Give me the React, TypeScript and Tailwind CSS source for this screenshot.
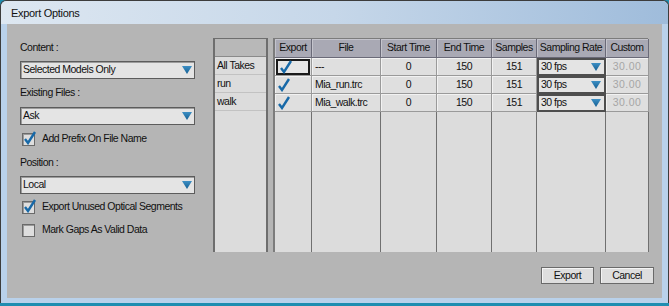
import React from 'react'

const font = "font-['Liberation_Sans',Arial,sans-serif]"

const Arrow = () => (
    <svg width="10" height="8" viewBox="0 0 10 8" className="shrink-0">
        <defs>
            <linearGradient id="ar" x1="0" y1="0" x2="0" y2="1">
                <stop offset="0" stopColor="#3d8fc4" />
                <stop offset="1" stopColor="#145f93" />
            </linearGradient>
        </defs>
        <path d="M0 0 H10 L5 8 Z" fill="url(#ar)" />
    </svg>
)

const Tick = () => (
    <svg width="14" height="14" viewBox="0 0 14 14">
        <path d="M2 8 L5 12 L12 1" stroke="#1769a8" strokeWidth="2.4" fill="none" />
    </svg>
)

const Check = ({ on }: { on: boolean }) => (
    <div className="w-[13px] h-[13px] bg-[#dedede] border border-[#6a6a6a] shadow-[inset_1px_1px_0_#9a9a9a] relative shrink-0">
        {on && (
            <div className="absolute left-[0px] top-[-3px]">
                <Tick />
            </div>
        )}
    </div>
)

const Dropdown = ({ label }: { label: string }) => (
    <div className="h-[18px] w-[175px] bg-[#e4e4e4] border border-[#5c5c5c] shadow-[inset_1px_1px_0_#9c9c9c] flex items-center pl-[2px] pr-[2px] justify-between">
        <span>{label}</span>
        <Arrow />
    </div>
)

const cols = ['Export', 'File', 'Start Time', 'End Time', 'Samples', 'Sampling Rate', 'Custom']
const rows = [
    { file: '---', focus: true },
    { file: 'Mia_run.trc', focus: false },
    { file: 'Mia_walk.trc', focus: false },
]

const cell = 'h-[18px] bg-[#dfdfdf] border-r border-b border-[#9a9a9a] shadow-[inset_1px_1px_0_#f2f2f2] flex items-center'

export default function App() {
    return (
        <div className={`w-[669px] h-[306px] bg-[#1f8db0] ${font} text-[10.5px] tracking-[-0.5px] text-[#111]`}>
            <div className="h-[303px] bg-[#b9d1ea] border-l border-t border-r border-[#3c3c3c] rounded-tl-[6px] rounded-tr-[6px] flex flex-col">
                <div className="h-[23px] shrink-0 bg-gradient-to-r from-[#dde7f1] via-[#c6d7e9] to-[#9fbcdb] rounded-tl-[6px] rounded-tr-[6px] flex items-center pl-[10px] pt-[2px] text-[11px] tracking-[-0.3px] text-[#111]">
                    Export Options
                </div>
                <div className="mx-[6px] h-[274px] bg-[#b5b5b5] flex flex-col">
                    <div className="flex pt-[14px] pl-[13px] h-[228px]">
                        <div className="w-[175px] flex flex-col">
                            <div className="h-[14px] mt-[3px] flex items-center">Content :</div>
                            <div className="mt-[6px]"><Dropdown label="Selected Models Only" /></div>
                            <div className="h-[14px] mt-[7px] flex items-center">Existing Files :</div>
                            <div className="mt-[7px]"><Dropdown label="Ask" /></div>
                            <div className="h-[14px] mt-[7px] flex items-center gap-[7px] pl-[2px]">
                                <Check on />
                                <span>Add Prefix On File Name</span>
                            </div>
                            <div className="h-[14px] mt-[10px] flex items-center">Position :</div>
                            <div className="mt-[6px]"><Dropdown label="Local" /></div>
                            <div className="h-[14px] mt-[6px] flex items-center gap-[7px] pl-[2px]">
                                <Check on />
                                <span className="whitespace-nowrap">Export Unused Optical Segments</span>
                            </div>
                            <div className="h-[14px] mt-[9px] flex items-center gap-[7px] pl-[2px]">
                                <Check on={false} />
                                <span>Mark Gaps As Valid Data</span>
                            </div>
                        </div>

                        <div className="ml-[18px] w-[55px] h-[214px] border-l-2 border-r-2 border-t border-[#6e6e6e] bg-[#dcdcdc] flex flex-col">
                            <div className="h-[18px] bg-[#b8b8b8] border-b border-[#8a8a8a]" />
                            {['All Takes', 'run', 'walk'].map((t) => (
                                <div key={t} className="h-[18px] border-b border-[#c2c2c2] flex items-center pl-[2px]">
                                    {t}
                                </div>
                            ))}
                        </div>

                        <div className="ml-[5px] w-[375px] h-[214px] border-l-2 border-t border-[#7c7c7c] bg-[#dcdcdc] grid grid-cols-[37px_69px_56px_55px_45px_69px_43px] grid-rows-[19px_18px_18px_18px_1fr]">
                            {cols.map((c) => (
                                <div key={c} className="bg-[#a9a9b4] border-r border-b border-[#6a6a78] shadow-[inset_1px_1px_0_#c4c4cc] flex items-center justify-center whitespace-nowrap">
                                    {c}
                                </div>
                            ))}
                            {rows.map((r) => (
                                <React.Fragment key={r.file}>
                                    <div className={`${cell} px-[1px]`}>
                                        <div className={`w-[34px] h-[16px] flex items-center pl-[1px] ${r.focus ? 'border-2 border-[#1a1a1a] bg-[#e6e6e6]' : ''}`}>
                                            <Tick />
                                        </div>
                                    </div>
                                    <div className={`${cell} pl-[3px]`}>{r.file}</div>
                                    <div className={`${cell} justify-center`}>0</div>
                                    <div className={`${cell} justify-center`}>150</div>
                                    <div className={`${cell} justify-center`}>151</div>
                                    <div className="h-[18px] bg-[#e4e4e4] border-2 border-[#4e4e4e] flex items-center justify-between pl-[2px] pr-[3px]">
                                        <span>30 fps</span>
                                        <Arrow />
                                    </div>
                                    <div className={`${cell} justify-center text-[#a6a6a6] tracking-[0.4px]`}>30.00</div>
                                </React.Fragment>
                            ))}
                            {cols.map((c) => (
                                <div key={c + 'f'} className="border-r border-[#707070]" />
                            ))}
                        </div>
                    </div>
                    <div className="flex justify-end gap-[6px] pr-[8px] mt-[15px]">
                        <button className="w-[53px] h-[17px] bg-[#dedede] border border-[#6a6a6a] shadow-[inset_1px_1px_0_#f4f4f4]">Export</button>
                        <button className="w-[54px] h-[17px] bg-[#dedede] border border-[#6a6a6a] shadow-[inset_1px_1px_0_#f4f4f4]">Cancel</button>
                    </div>
                </div>
            </div>
        </div>
    )
}
